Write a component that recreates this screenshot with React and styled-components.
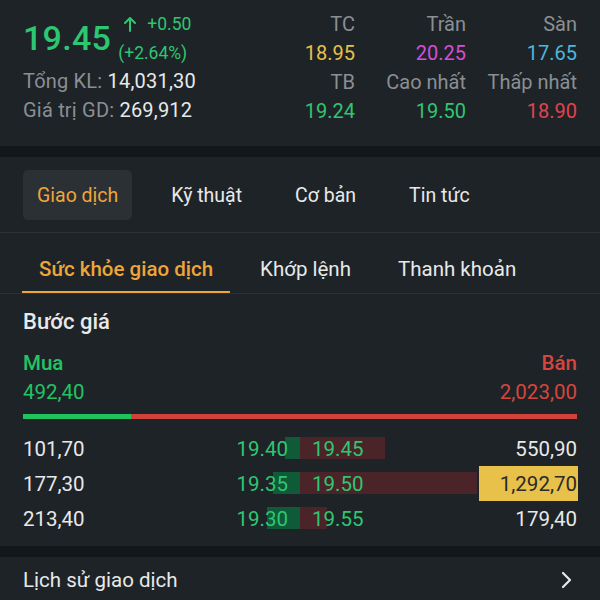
import React from "react";
import styled, { createGlobalStyle } from "styled-components";

const Global = createGlobalStyle`
  html, body { margin: 0; padding: 0; background: #1e2327; }
  body { font-family: Roboto, "Noto Sans", "Liberation Sans", sans-serif; }
`;

const C = {
  bg: "#1e2327",
  band: "#12171b",
  line: "#2b3034",
  gray: "#8a8f94",
  white: "#e8e9ea",
  orange: "#eea53a",
  green: "#2ec771",
  red: "#e0434f",
  yellow: "#e8c14a",
  magenta: "#d24fdb",
  cyan: "#4cb8dc",
};

const Page = styled.div`
  width: 600px;
  height: 600px;
  overflow: hidden;
  background: ${C.bg};
  color: ${C.white};
`;

const Header = styled.div`
  display: flex;
  justify-content: space-between;
  padding: 9px 23px 21px 23px;
`;

const LeftCol = styled.div`
  display: flex;
  flex-direction: column;
`;

const PriceRow = styled.div`
  display: flex;
  align-items: center;
  height: 58px;
`;

const BigPrice = styled.div`
  font-size: 34px;
  font-weight: 500;
  color: ${C.green};
  letter-spacing: 0.3px;
`;

const ChangeStack = styled.div`
  display: flex;
  flex-direction: column;
  margin-left: 7px;
  color: ${C.green};
  font-size: 17.5px;
`;

const ChangeLine = styled.div`
  display: flex;
  align-items: center;
  height: 29px;
  padding-left: ${(p) => p.$indent || 0}px;
  gap: 11px;
`;

const InfoLine = styled.div`
  font-size: 20px;
  line-height: 29px;
  color: ${C.gray};
  letter-spacing: 0.2px;
  & > span { color: ${C.white}; }
`;

const StatGrid = styled.div`
  display: grid;
  grid-template-columns: repeat(3, 111px);
  grid-auto-rows: 29px;
  justify-items: end;
  align-items: center;
  font-size: 20px;
`;

const Stat = styled.div`
  color: ${(p) => p.$color || C.gray};
`;

const Band = styled.div`
  height: 11px;
  background: ${C.band};
`;

const MainTabs = styled.div`
  display: flex;
  gap: 25px;
  padding: 13px 23px 12px;
  border-bottom: 1px solid ${C.line};
`;

const MainTab = styled.div`
  height: 50px;
  display: flex;
  align-items: center;
  padding: 0 14px;
  border-radius: 5px;
  font-size: 19.5px;
  background: ${(p) => (p.$active ? "#2b3034" : "transparent")};
  color: ${(p) => (p.$active ? C.orange : C.white)};
`;

const SubTabs = styled.div`
  display: flex;
  gap: 13px;
  padding: 0 22px;
  border-bottom: 1px solid ${C.line};
`;

const SubTab = styled.div`
  padding: 24px 17px 10px;
  line-height: 24px;
  font-size: 20.5px;
  font-weight: ${(p) => (p.$active ? 500 : 400)};
  color: ${(p) => (p.$active ? C.orange : C.white)};
  border-bottom: 2px solid ${(p) => (p.$active ? C.orange : "transparent")};
`;

const Section = styled.div`
  padding: 14px 23px 10px;
`;

const SectionTitle = styled.div`
  font-size: 22px;
  font-weight: 500;
  line-height: 28px;
  color: ${C.white};
`;

const SideRow = styled.div`
  display: flex;
  justify-content: space-between;
  margin-top: ${(p) => p.$top || 0}px;
  font-size: 20.5px;
  line-height: 29px;
  font-weight: ${(p) => p.$weight || 400};
`;

const Side = styled.div`
  color: ${(p) => p.$color};
`;

const RatioBar = styled.div`
  display: flex;
  height: 5px;
  margin: 7px 0 12px;
`;

const RatioPart = styled.div`
  background: ${(p) => p.$color};
`;

const Book = styled.div`
  display: flex;
  flex-direction: column;
`;

const BookRow = styled.div`
  display: grid;
  grid-template-columns: 1fr 1fr;
  height: 35px;
  font-size: 20.5px;
`;

const Half = styled.div`
  position: relative;
  display: flex;
  align-items: center;
  justify-content: space-between;
`;

const DepthBar = styled.div`
  position: absolute;
  top: 6px;
  bottom: 7px;
  ${(p) => (p.$side === "bid" ? "right: 0;" : "left: 0;")}
  background: ${(p) => (p.$side === "bid" ? "#0f5a37" : "#4a2428")};
`;

const Qty = styled.div`
  position: relative;
  height: 100%;
  display: flex;
  align-items: center;
  color: ${(p) => (p.$hl ? "#2a2a2a" : C.white)};
  background: ${(p) => (p.$hl ? C.yellow : "transparent")};
  padding: ${(p) => (p.$hl ? "0 1px 0 21px" : "0")};
  margin-right: ${(p) => (p.$hl ? "-1px" : "0")};
`;

const Price = styled.div`
  position: relative;
  color: ${C.green};
  padding: ${(p) => (p.$side === "bid" ? "0 12px 0 0" : "0 0 0 12px")};
`;

const HistoryRow = styled.div`
  display: flex;
  align-items: center;
  justify-content: space-between;
  height: 46px;
  padding: 0 27px 0 23px;
  font-size: 20.5px;
  color: ${C.white};
`;

const ArrowUp = () => (
  <svg width="12" height="16" viewBox="0 0 12 16" fill="none">
    <path d="M6 15V2M1 7l5-5 5 5" stroke={C.green} strokeWidth="2" strokeLinecap="round" strokeLinejoin="round" />
  </svg>
);

const Chevron = () => (
  <svg width="12" height="18" viewBox="0 0 12 18" fill="none">
    <path d="M2 2l7 7-7 7" stroke={C.white} strokeWidth="2.2" strokeLinecap="round" strokeLinejoin="round" />
  </svg>
);

const rows = [
  { bq: "101,70", bp: "19.40", bw: 15, ap: "19.45", aw: 85, aq: "550,90" },
  { bq: "177,30", bp: "19.35", bw: 27, ap: "19.50", aw: 177, aq: "1,292,70", hl: true },
  { bq: "213,40", bp: "19.30", bw: 33, ap: "19.55", aw: 27, aq: "179,40" },
];

export default function App() {
  return (
    <Page>
      <Global />
      <Header>
        <LeftCol>
          <PriceRow>
            <BigPrice>19.45</BigPrice>
            <ChangeStack>
              <ChangeLine $indent={6}>
                <ArrowUp />
                <span>+0.50</span>
              </ChangeLine>
              <ChangeLine>(+2.64%)</ChangeLine>
            </ChangeStack>
          </PriceRow>
          <InfoLine>
            Tổng KL: <span>14,031,30</span>
          </InfoLine>
          <InfoLine>
            Giá trị GD: <span>269,912</span>
          </InfoLine>
        </LeftCol>
        <StatGrid>
          <Stat>TC</Stat>
          <Stat>Trần</Stat>
          <Stat>Sàn</Stat>
          <Stat $color={C.yellow}>18.95</Stat>
          <Stat $color={C.magenta}>20.25</Stat>
          <Stat $color={C.cyan}>17.65</Stat>
          <Stat>TB</Stat>
          <Stat>Cao nhất</Stat>
          <Stat>Thấp nhất</Stat>
          <Stat $color={C.green}>19.24</Stat>
          <Stat $color={C.green}>19.50</Stat>
          <Stat $color={C.red}>18.90</Stat>
        </StatGrid>
      </Header>
      <Band />
      <MainTabs>
        <MainTab $active>Giao dịch</MainTab>
        <MainTab>Kỹ thuật</MainTab>
        <MainTab>Cơ bản</MainTab>
        <MainTab>Tin tức</MainTab>
      </MainTabs>
      <SubTabs>
        <SubTab $active>Sức khỏe giao dịch</SubTab>
        <SubTab>Khớp lệnh</SubTab>
        <SubTab>Thanh khoản</SubTab>
      </SubTabs>
      <Section>
        <SectionTitle>Bước giá</SectionTitle>
        <SideRow $top={13} $weight={500}>
          <Side $color="#22c463">Mua</Side>
          <Side $color="#d8453d">Bán</Side>
        </SideRow>
        <SideRow>
          <Side $color="#22c463">492,40</Side>
          <Side $color="#d8453d">2,023,00</Side>
        </SideRow>
        <RatioBar>
          <RatioPart $color="#1fc45e" style={{ width: "19.5%" }} />
          <RatioPart $color="#d0433b" style={{ flex: 1 }} />
        </RatioBar>
        <Book>
          {rows.map((r) => (
            <BookRow key={r.bp}>
              <Half>
                <DepthBar $side="bid" style={{ width: r.bw }} />
                <Qty>{r.bq}</Qty>
                <Price $side="bid">{r.bp}</Price>
              </Half>
              <Half>
                <DepthBar $side="ask" style={{ width: r.aw }} />
                <Price $side="ask">{r.ap}</Price>
                <Qty $hl={r.hl}>{r.aq}</Qty>
              </Half>
            </BookRow>
          ))}
        </Book>
      </Section>
      <Band />
      <HistoryRow>
        <span>Lịch sử giao dịch</span>
        <Chevron />
      </HistoryRow>
    </Page>
  );
}
